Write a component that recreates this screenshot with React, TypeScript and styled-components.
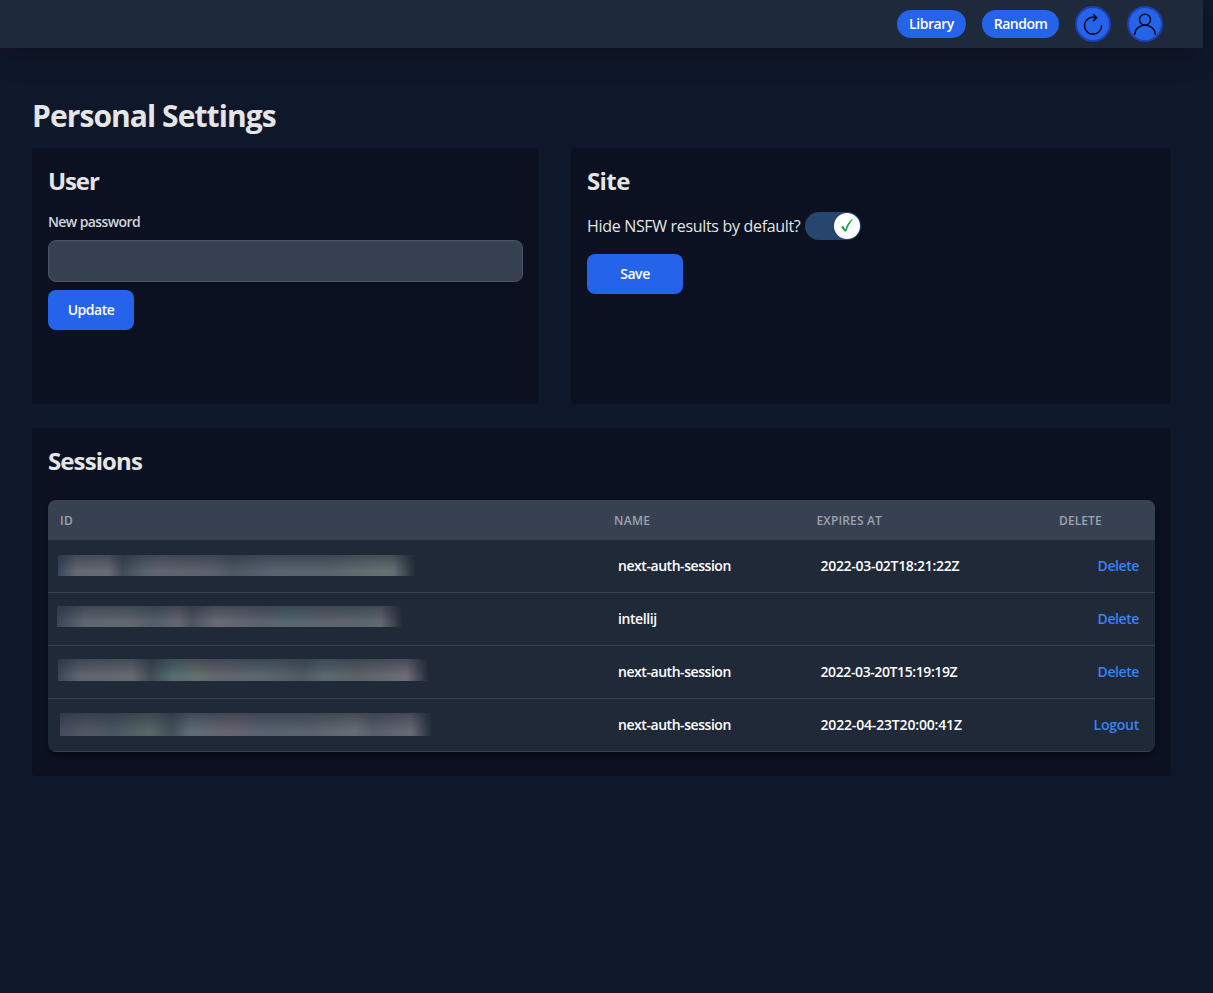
import React from "react";
import styled, { createGlobalStyle } from "styled-components";

const Global = createGlobalStyle`
  *, *::before, *::after { box-sizing: border-box; }
  html, body { margin: 0; padding: 0; }
  body {
    min-height: 993px;
    background: #0f172a;
    color: #e5e5e5;
    font-family: "Segoe UI", "Open Sans", "Noto Sans", sans-serif;
    font-size: 16px;
    line-height: 24px;
  }
  h1, h2, p { margin: 0; }
  button, input { font-family: inherit; }
`;

const Nav = styled.nav`
  display: flex;
  align-items: center;
  justify-content: flex-end;
  width: 1203px;
  height: 48px;
  padding-right: 40px;
  background: #1e293b;
  box-shadow: 0 20px 25px -5px rgba(0, 0, 0, 0.1), 0 8px 10px -6px rgba(0, 0, 0, 0.1);
`;

const Pill = styled.button<{ $width: number; $gap: number; $track: number }>`
  width: ${(p) => p.$width}px;
  height: 28px;
  margin-right: ${(p) => p.$gap}px;
  padding: 0;
  border: 0;
  border-radius: 14px;
  background: #2563eb;
  color: #fff;
  font-size: 14px;
  font-weight: 600;
  line-height: 28px;
  letter-spacing: ${(p) => p.$track}px;
`;

const RoundButton = styled.button<{ $gap?: number }>`
  display: flex;
  align-items: center;
  justify-content: center;
  width: 36px;
  height: 36px;
  margin-right: ${(p) => p.$gap ?? 0}px;
  padding: 0;
  border: 2px solid #1e40af;
  border-radius: 50%;
  background: #2563eb;
  color: #000;
`;

const Main = styled.main`
  width: 1203px;
  padding: 46px 32px 0;
`;

const Title = styled.h1`
  height: 54px;
  font-size: 30px;
  font-weight: 700;
  line-height: 44px;
  letter-spacing: -0.93px;
`;

const TopCards = styled.div`
  display: grid;
  grid-template-columns: 507px 600px;
  column-gap: 32px;
  margin-bottom: 24px;
`;

const Card = styled.section<{ $height: number }>`
  width: 100%;
  height: ${(p) => p.$height}px;
  padding: 16px;
  border-radius: 4px;
  background: #0b1120;
`;

const SessionsArea = styled.div`
  width: 1139px;
`;

const CardTitle = styled.h2<{ $gap: number; $track: number }>`
  height: 36px;
  margin-bottom: ${(p) => p.$gap}px;
  font-size: 24px;
  font-weight: 700;
  line-height: 34px;
  letter-spacing: ${(p) => p.$track}px;
`;

const Label = styled.label`
  display: block;
  height: 20px;
  margin-bottom: 8px;
  color: #d1d5db;
  font-size: 14px;
  font-weight: 600;
  line-height: 20px;
  letter-spacing: -0.6px;
`;

const PasswordInput = styled.input`
  display: block;
  width: 100%;
  height: 42px;
  margin-bottom: 8px;
  padding: 0 10px;
  border: 1px solid #4b5563;
  border-radius: 8px;
  background: #374151;
  color: #fff;
`;

const ActionButton = styled.button<{ $width: number; $track: number }>`
  width: ${(p) => p.$width}px;
  height: 40px;
  padding: 0;
  border: 0;
  border-radius: 8px;
  background: #2563eb;
  color: #fff;
  font-size: 14px;
  font-weight: 600;
  line-height: 40px;
  letter-spacing: ${(p) => p.$track}px;
`;

const SettingRow = styled.div`
  display: flex;
  align-items: center;
  height: 28px;
  margin-bottom: 14px;
`;

const SettingText = styled.span`
  width: 218px;
  white-space: nowrap;
  letter-spacing: -0.32px;
`;

const Switch = styled.div`
  display: flex;
  align-items: center;
  justify-content: flex-end;
  width: 56px;
  height: 28px;
  padding-right: 1px;
  border-radius: 14px;
  background: #26456f;
`;

const Knob = styled.div`
  display: flex;
  align-items: center;
  justify-content: center;
  width: 26px;
  height: 26px;
  border-radius: 50%;
  background: #fff;
`;

const Table = styled.div`
  overflow: hidden;
  border-radius: 8px;
  background: #1f2937;
  box-shadow: 0 4px 6px -1px rgba(0, 0, 0, 0.3), 0 2px 4px -2px rgba(0, 0, 0, 0.3);
`;

const Row = styled.div`
  display: grid;
  grid-template-columns: 554px 202.5px 242.5px 108px;
  height: 53px;
  border-bottom: 1px solid #374151;
`;

const HeadRow = styled(Row)`
  height: 40px;
  border-bottom: 0;
  background: #374151;
`;

const HeadCell = styled.div<{ $track: number }>`
  padding-left: 12px;
  color: #9ca3af;
  font-size: 12px;
  font-weight: 600;
  line-height: 41px;
  letter-spacing: ${(p) => p.$track}px;
`;

const Cell = styled.div<{ $track: number }>`
  padding-left: 16px;
  color: #fff;
  font-size: 14px;
  font-weight: 600;
  line-height: 52px;
  letter-spacing: ${(p) => p.$track}px;
  white-space: nowrap;
`;

const ActionCell = styled.div<{ $track: number }>`
  padding-right: 16px;
  color: #3b82f6;
  font-size: 14px;
  font-weight: 600;
  line-height: 52px;
  letter-spacing: ${(p) => p.$track}px;
  text-align: right;
`;

const HiddenId = styled.div<{ $x: number; $y: number; $w: number; $h: number; $stops: string }>`
  width: ${(p) => p.$w}px;
  height: ${(p) => p.$h}px;
  margin: ${(p) => p.$y}px 0 0 ${(p) => p.$x}px;
  background:
    linear-gradient(to bottom, rgba(31, 41, 55, 0.5), rgba(31, 41, 55, 0) 75%),
    linear-gradient(to right, ${(p) => p.$stops});
  mask-image: linear-gradient(to right, #000 calc(100% - 22px), transparent);
`;

type Session = {
  name: string;
  nameTrack: number;
  expires: string;
  expiresTrack: number;
  action: string;
  actionTrack: number;
  box: [number, number, number, number];
  stops: string;
};

const sessions: Session[] = [
  {
    name: "next-auth-session", nameTrack: -0.45, expires: "2022-03-02T18:21:22Z", expiresTrack: -0.3, action: "Delete", actionTrack: -0.42,
    box: [10, 15, 358, 21],
    stops: "#39445a, #626873 5%, #686a75 14%, #404a56 18%, #56616a 24%, #626470 28%, #5a616b 43%, #4d5662 49%, #596371 60%, #59636b 75%, #667172 91%, #5c676e",
  },
  {
    name: "intellij", nameTrack: -0.42, expires: "", expiresTrack: 0, action: "Delete", actionTrack: -0.42,
    box: [9, 13, 346, 21],
    stops: "#3b4559, #5f656f 8%, #61686d 20%, #535e6b 28%, #65656e 35%, #4c5460 39%, #696a74 46%, #5a616c 60%, #546770 67%, #5d626c 77%, #5a666b 89%, #6d6972",
  },
  {
    name: "next-auth-session", nameTrack: -0.45, expires: "2022-03-20T15:19:19Z", expiresTrack: -0.4, action: "Delete", actionTrack: -0.42,
    box: [10, 13, 371, 22],
    stops: "#3b4559, #60646d 6%, #656a70 20%, #414a56 25%, #546d73 31%, #64706b 37%, #64646f 43%, #59676d 55%, #505962 66%, #5a6973 72%, #596265 80%, #6c6c76 93%",
  },
  {
    name: "next-auth-session", nameTrack: -0.45, expires: "2022-04-23T20:00:41Z", expiresTrack: -0.17, action: "Logout", actionTrack: -0.25,
    box: [12, 14, 373, 23],
    stops: "#454a5d, #515761 7%, #475561 14%, #566766 24%, #424f59 30%, #5f6b74 35%, #65626e 46%, #56616f 55%, #5a626d 68%, #666c72 79%, #555e68 84%, #666974 94%",
  },
];

const RefreshIcon = () => (
  <svg width="32" height="32" viewBox="0 0 32 32" fill="none" stroke="currentColor" strokeWidth="1.3">
    <path d="M19.3 9.9A8.5 8.5 0 1 0 24.5 17.1" />
    <path d="M19.6 9.9L16 9.5" />
    <path d="M16.3 6.2L19.8 9.8L16 13.2" />
  </svg>
);

const UserIcon = () => (
  <svg width="32" height="32" viewBox="0 0 32 32" fill="none" stroke="currentColor" strokeWidth="1.3">
    <circle cx="16" cy="11.7" r="5.5" />
    <path d="M5.6 26.9A10.4 9.7 0 0 1 26.4 26.9" />
  </svg>
);

const CheckIcon = () => (
  <svg width="14" height="16" viewBox="0 0 14 16">
    <path d="M1.1 8.9L3 7.8L5.1 11.2C6.9 6.8 9 3.5 12.1 1.1L12.8 1.8C10.1 4.7 7.8 8.5 6.2 13.6H4.5Z" fill="#16a34a" />
  </svg>
);

export default function App() {
  return (
    <>
      <Global />
      <Nav>
        <Pill $width={69} $gap={16} $track={-0.45}>Library</Pill>
        <Pill $width={77} $gap={16} $track={-0.5}>Random</Pill>
        <RoundButton $gap={16} aria-label="Refresh"><RefreshIcon /></RoundButton>
        <RoundButton aria-label="Account"><UserIcon /></RoundButton>
      </Nav>
      <Main>
        <Title>Personal Settings</Title>
        <TopCards>
          <Card $height={256}>
            <CardTitle $gap={12} $track={-1.1}>User</CardTitle>
            <Label htmlFor="password">New password</Label>
            <PasswordInput id="password" type="password" />
            <ActionButton $width={86} $track={-0.5}>Update</ActionButton>
          </Card>
          <Card $height={256}>
            <CardTitle $gap={12} $track={-0.6}>Site</CardTitle>
            <SettingRow>
              <SettingText>Hide NSFW results by default?</SettingText>
              <Switch><Knob><CheckIcon /></Knob></Switch>
            </SettingRow>
            <ActionButton $width={96} $track={-0.45}>Save</ActionButton>
          </Card>
        </TopCards>
        <SessionsArea>
          <Card $height={348}>
            <CardTitle $gap={20} $track={-0.9}>Sessions</CardTitle>
            <Table>
              <HeadRow>
                <HeadCell $track={0.3}>ID</HeadCell>
                <HeadCell $track={0.3}>NAME</HeadCell>
                <HeadCell $track={0.15}>EXPIRES AT</HeadCell>
                <HeadCell $track={0.1}>DELETE</HeadCell>
              </HeadRow>
              {sessions.map((s, i) => (
                <Row key={i}>
                  <HiddenId $x={s.box[0]} $y={s.box[1]} $w={s.box[2]} $h={s.box[3]} $stops={s.stops} />
                  <Cell $track={s.nameTrack}>{s.name}</Cell>
                  <Cell $track={s.expiresTrack}>{s.expires}</Cell>
                  <ActionCell $track={s.actionTrack}>{s.action}</ActionCell>
                </Row>
              ))}
            </Table>
          </Card>
        </SessionsArea>
      </Main>
    </>
  );
}
